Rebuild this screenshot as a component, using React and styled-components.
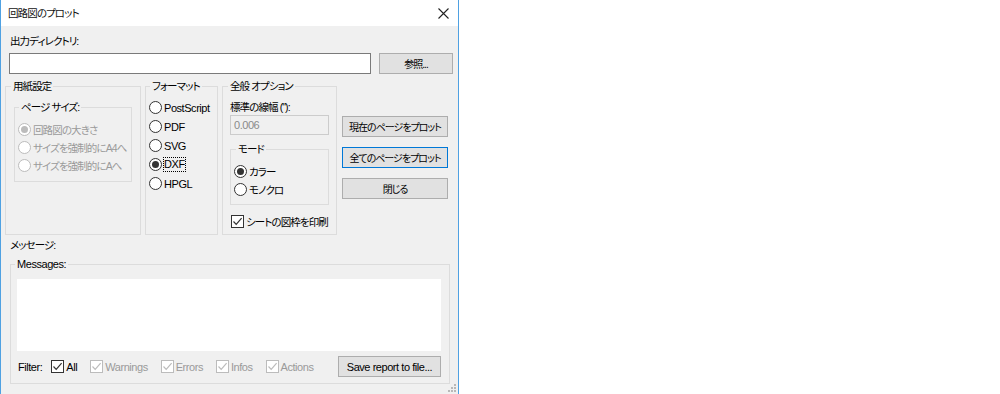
import React from 'react';
import styled, { createGlobalStyle } from 'styled-components';

const GlobalStyle = createGlobalStyle`
  html, body {
    margin: 0;
    padding: 0;
    background: #fff;
  }
  body {
    font-family: "Liberation Sans", "Noto Sans CJK JP", sans-serif;
    font-size: 10.5px;
    letter-spacing: -0.9px;
    font-feature-settings: "palt";
    white-space: nowrap;
    color: #000;
  }
`;

// Latin-only texts are drawn a bit larger, like the Meiryo UI latin glyphs
const En = styled.span`
  font-size: 11px;
  letter-spacing: -0.45px;
`;

const Window = styled.div`
  position: relative;
  width: 457px;
  height: 394px;
  border-left: 1px solid #4fa1e2;
  border-right: 1px solid #4fa1e2;
  background: #f0f0f0;
  display: flex;
  flex-direction: column;
  overflow: hidden;
`;

const TitleBar = styled.div`
  height: 26px;
  flex: none;
  background: #fff;
  display: flex;
  align-items: center;
  justify-content: space-between;
  padding-left: 7px;
  padding-right: 9px;
`;

const Title = styled.span`
  line-height: 15px;
  color: #111;
`;

const CloseIcon = () => (
  <svg width="11" height="11" viewBox="0 0 11 11">
    <path d="M0.5 0.5 L10.5 10.5 M10.5 0.5 L0.5 10.5" stroke="#222" strokeWidth="1.1" fill="none" />
  </svg>
);

const DirSection = styled.div`
  padding: 8px 0 0 8px;
`;

const Label = styled.div`
  line-height: 15px;
  height: 15px;
  margin-left: ${p => p.$indent || 0}px;
  color: ${p => (p.$disabled ? '#9a9a9a' : '#000')};
`;

const InputRow = styled.div`
  display: flex;
  gap: 8px;
  margin-top: 4px;
`;

const TextInput = styled.div`
  box-sizing: border-box;
  width: ${p => p.$width}px;
  height: ${p => p.$height || 21}px;
  border: 1px solid ${p => (p.$disabled ? '#cccccc' : '#7a7a7a')};
  background: ${p => (p.$disabled ? '#f0f0f0' : '#fff')};
  color: #8a8a8a;
  padding: 0 3px;
  display: flex;
  align-items: center;
`;

const Button = styled.div`
  box-sizing: border-box;
  width: ${p => p.$width}px;
  height: 21px;
  border: 1px solid ${p => (p.$default ? '#0078d7' : '#adadad')};
  background: #e1e1e1;
  display: flex;
  align-items: center;
  justify-content: center;
  font-size: 10px;
  letter-spacing: -1px;
  flex: none;
`;

const GroupsRow = styled.div`
  display: flex;
  margin-top: 5px;
  padding-left: 4px;
`;

const Group = styled.fieldset`
  box-sizing: border-box;
  margin: 0;
  min-width: 0;
  padding: 0;
  border: 1px solid #dcdcdc;
  width: ${p => p.$width}px;
  height: ${p => p.$height}px;
  margin-left: ${p => p.$left || 0}px;
  margin-top: ${p => p.$top || 0}px;
  flex: none;
`;

const Legend = styled.legend`
  padding: 0 2px;
  margin-left: ${p => p.$indent || 5}px;
  line-height: 15px;
  height: 15px;
  color: #000;
`;

const GroupBody = styled.div`
  padding: ${p => p.$pad || '0'};
  display: flex;
  flex-direction: column;
`;

const OptionRow = styled.div`
  display: flex;
  align-items: center;
  height: ${p => p.$h || 18}px;
  gap: 2px;
  margin-left: ${p => p.$left || 0}px;
  margin-top: ${p => p.$top || 0}px;
  color: ${p => (p.$disabled ? '#9a9a9a' : '#000')};
`;

const RadioCircle = styled.span`
  box-sizing: border-box;
  width: 13px;
  height: 13px;
  border-radius: 50%;
  border: 1px solid ${p => (p.$disabled ? '#bcbcbc' : '#333')};
  background: #fff;
  display: flex;
  align-items: center;
  justify-content: center;
  flex: none;
  &::after {
    content: '';
    display: ${p => (p.$checked ? 'block' : 'none')};
    width: 7px;
    height: 7px;
    border-radius: 50%;
    background: ${p => (p.$disabled ? '#bcbcbc' : '#333')};
  }
`;

const FocusText = styled.span`
  outline: 1px dotted #000;
  outline-offset: 0;
  line-height: 13px;
`;

const CheckBox = styled.span`
  box-sizing: border-box;
  width: 13px;
  height: 13px;
  border: 1px solid ${p => (p.$disabled ? '#bcbcbc' : '#333')};
  background: #fff;
  display: flex;
  align-items: center;
  justify-content: center;
  flex: none;
`;

const Check = ({ disabled }) => (
  <CheckBox $disabled={disabled}>
    <svg width="11" height="11" viewBox="0 0 11 11">
      <path d="M1.5 5.5 L4.2 8.3 L9.6 2.2" stroke={disabled ? '#bcbcbc' : '#333'} strokeWidth="1.2" fill="none" />
    </svg>
  </CheckBox>
);

const Radio = ({ label, checked, disabled, focus, h }) => (
  <OptionRow $disabled={disabled} $h={h}>
    <RadioCircle $checked={checked} $disabled={disabled} />
    {focus ? <FocusText>{label}</FocusText> : <span>{label}</span>}
  </OptionRow>
);

const ButtonColumn = styled.div`
  display: flex;
  flex-direction: column;
  gap: 10px;
  margin-left: 5px;
  padding-top: 37px;
`;

const MessageSection = styled.div`
  padding-left: 8px;
  margin-top: 3px;
`;

const MessageArea = styled.div`
  width: 424px;
  height: 72px;
  margin: 7px 0 0 6px;
  background: #fff;
`;

const FilterRow = styled.div`
  display: flex;
  align-items: center;
  height: 21px;
  margin-top: 5px;
  padding-left: 7px;
  padding-right: 8px;
`;

const FilterLabel = styled(En)`
  margin-right: 9px;
`;

const FilterItem = styled.span`
  display: flex;
  align-items: center;
  gap: 2px;
  margin-right: 13px;
  color: ${p => (p.$disabled ? '#9a9a9a' : '#000')};
`;

const SaveButton = styled(Button)`
  margin-left: auto;
`;

const Grip = styled.svg`
  position: absolute;
  right: 2px;
  bottom: 2px;
`;

export default function App() {
  return (
    <>
      <GlobalStyle />
      <Window>
        <TitleBar>
          <Title>回路図のプロット</Title>
          <CloseIcon />
        </TitleBar>

        <DirSection>
          <Label $indent={1}>出力ディレクトリ:</Label>
          <InputRow>
            <TextInput $width={362} />
            <Button $width={74}>参照...</Button>
          </InputRow>
        </DirSection>

        <GroupsRow>
          <Group $width={136} $height={156}>
            <Legend>用紙設定</Legend>
            <Group $width={118} $height={82} $left={8} $top={6}>
              <Legend $indent={4}>ページ サイズ:</Legend>
              <GroupBody $pad="5px 0 0 3px">
                <Radio label="回路図の大きさ" checked disabled />
                <Radio label="サイズを強制的にA4へ" disabled />
                <Radio label="サイズを強制的にAへ" disabled />
              </GroupBody>
            </Group>
          </Group>

          <Group $width={73} $height={156} $left={4}>
            <Legend $indent={4}>フォーマット</Legend>
            <GroupBody $pad="4px 0 0 3px">
              <Radio label={<En>PostScript</En>} h={19} />
              <Radio label={<En>PDF</En>} h={19} />
              <Radio label={<En>SVG</En>} h={19} />
              <Radio label={<En>DXF</En>} checked focus h={19} />
              <Radio label={<En>HPGL</En>} h={19} />
            </GroupBody>
          </Group>

          <Group $width={115} $height={156} $left={4}>
            <Legend>全般 オプション</Legend>
            <GroupBody $pad="6px 0 0 7px">
              <Label>標準の線幅 ("):</Label>
              <TextInput $width={99} $height={20} $disabled><En>0.006</En></TextInput>
              <Group $width={99} $height={63} $top={7}>
                <Legend>モード</Legend>
                <GroupBody $pad="5px 0 0 3px">
                  <Radio label="カラー" checked />
                  <Radio label="モノクロ" />
                </GroupBody>
              </Group>
              <OptionRow $top={7} $left={1}>
                <Check />
                <span>シートの図枠を印刷</span>
              </OptionRow>
            </GroupBody>
          </Group>

          <ButtonColumn>
            <Button $width={106}>現在のページをプロット</Button>
            <Button $width={106} $default>全てのページをプロット</Button>
            <Button $width={106}>閉じる</Button>
          </ButtonColumn>
        </GroupsRow>

        <MessageSection>
          <Label $indent={1}>メッセージ:</Label>
          <Group $width={440} $height={127} $left={1} $top={4}>
            <Legend $indent={4}><En>Messages:</En></Legend>
            <MessageArea />
            <FilterRow>
              <FilterLabel>Filter:</FilterLabel>
              <FilterItem><Check /><En>All</En></FilterItem>
              <FilterItem $disabled><Check disabled /><En>Warnings</En></FilterItem>
              <FilterItem $disabled><Check disabled /><En>Errors</En></FilterItem>
              <FilterItem $disabled><Check disabled /><En>Infos</En></FilterItem>
              <FilterItem $disabled><Check disabled /><En>Actions</En></FilterItem>
              <SaveButton $width={103}><En>Save report to file...</En></SaveButton>
            </FilterRow>
          </Group>
        </MessageSection>

        <Grip width="8" height="8" viewBox="0 0 8 8">
          <rect x="6" y="0" width="2" height="2" fill="#b8b8b8" />
          <rect x="3" y="3" width="2" height="2" fill="#b8b8b8" />
          <rect x="6" y="3" width="2" height="2" fill="#b8b8b8" />
          <rect x="0" y="6" width="2" height="2" fill="#b8b8b8" />
          <rect x="3" y="6" width="2" height="2" fill="#b8b8b8" />
          <rect x="6" y="6" width="2" height="2" fill="#b8b8b8" />
        </Grip>
      </Window>
    </>
  );
}
